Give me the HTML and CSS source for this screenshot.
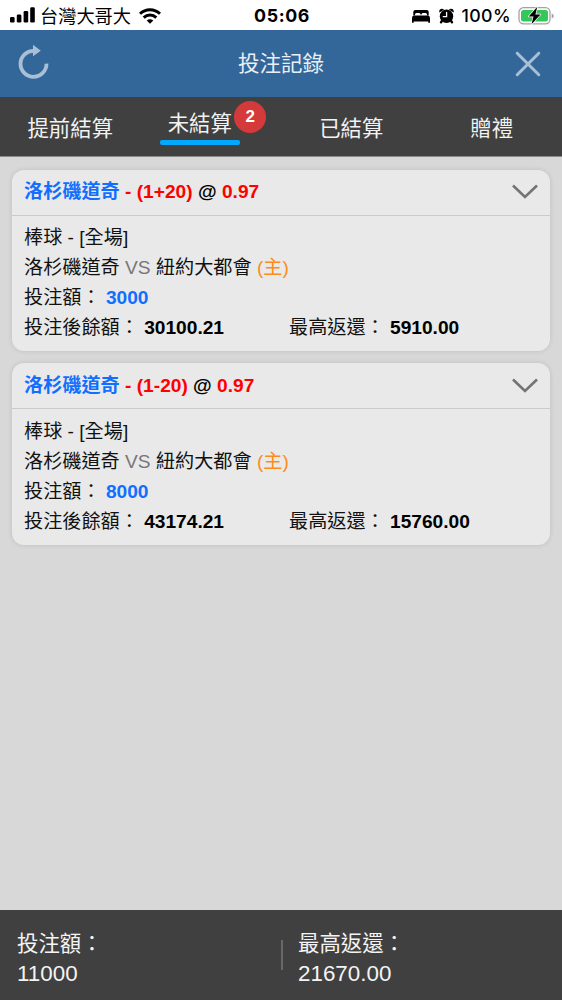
FILE: index.html
```html
<!DOCTYPE html>
<html lang="zh-Hant">
<head>
<meta charset="utf-8">
<title>投注記錄</title>
<link rel="stylesheet" href="styles.css">
</head>
<body>
<div class="screen">
  <div class="status">
    <div class="status-left">
      <svg class="signal" width="25" height="16" viewBox="0 0 25 16"><rect x="0" y="10" width="4.6" height="5.5" rx="1.3"/><rect x="6.8" y="7.5" width="4.6" height="8" rx="1.3"/><rect x="13.6" y="4" width="4.6" height="11.5" rx="1.3"/><rect x="20.2" y="0.3" width="4.6" height="15.2" rx="1.3"/></svg>
      <span class="carrier">台灣大哥大</span>
      <svg class="wifi" width="22" height="16" viewBox="0 0 22 16"><g fill="none" stroke="#000" stroke-width="3"><path d="M1 5.8C6.5.3 15.500.3 21 5.800"/><path d="M4.700 9.700C8.400 6.200 13.600 6.200 17.300 9.700"/></g><path d="M11 15.800L7.700 12.500Q11 9.900 14.300 12.500Z"/></svg>
    </div>
    <div class="clock">05:06</div>
    <div class="status-right">
      <svg class="bed" width="18" height="13" viewBox="0 0 18 13"><path d="M1.300 5.500V2Q1.300 0 3.300 0H14.700Q16.700 0 16.700 2V5.500H15V4.500Q15 3 13.500 3H10.800Q9.500 3 9.500 4.500H8.500Q8.500 3 7.200 3H4.500Q3 3 3 4.500V5.500Z"/><path d="M0 8Q0 5.500 2 5.500H16Q18 5.500 18 8V12.700H16.300V11.500H1.700V12.700H0Z"/></svg>
      <svg class="alarm" width="15" height="16" viewBox="0 0 15 16"><circle cx="7.500" cy="8.300" r="6.700"/><path d="M.3 4.500Q-.2 1 3 .8Q4.300.8 5 1.700ZM14.700 4.500Q15.200 1 12 .8Q10.700.8 10 1.700Z"/><path d="M3.500 12L2 14.300M11.500 12L13 14.300" stroke="#000" stroke-width="2.400" stroke-linecap="round"/><path d="M7.600 4.500V8.700H4.300" fill="none" stroke="#fff" stroke-width="1.300" stroke-linecap="round"/></svg>
      <span class="percent">100%</span>
      <svg class="battery" width="36" height="20" viewBox="0 0 36 20"><rect x="1" y="1.700" width="31" height="16.100" rx="4.500" fill="#fff" stroke="#a3a3a3" stroke-width="1.300"/><rect x="3" y="3.900" width="27" height="11.700" rx="2.500" fill="#34c759"/><path d="M33.700 7.500Q35.800 8.200 35.800 10T33.700 12.500Z" fill="#a3a3a3"/><path d="M19.300.8L10.700 10.500H15.500L13.500 18.200L22.500 8.400H17.400Z" stroke="#fff" stroke-width="1.400" stroke-linejoin="round" paint-order="stroke"/></svg>
    </div>
  </div>

  <header class="header">
    <svg class="refresh" width="32" height="36" viewBox="0 0 32 36"><path d="M17 6.800A13 13 0 1 0 29.500 19.600" fill="none" stroke="#a9bfd5" stroke-width="3.800"/><path d="M16 .8L23.800 6.800L16 12.300Z" fill="#a9bfd5"/></svg>
    <h1 class="title">投注記錄</h1>
    <svg class="close" width="26" height="26" viewBox="0 0 26 26"><path d="M2.200 2.200L23.800 23.800M23.800 2.200L2.200 23.800" stroke="#a9bfd5" stroke-width="3" stroke-linecap="round"/></svg>
  </header>

  <nav class="tabs">
    <div class="tab">提前結算</div>
    <div class="tab active"><span class="tab-label">未結算<span class="badge">2</span></span></div>
    <div class="tab">已結算</div>
    <div class="tab">贈禮</div>
  </nav>

  <main class="list">
    <section class="card">
      <div class="card-head">
        <div class="pick"><span class="blue">洛杉磯道奇</span> <span class="red">- (1+20)</span> @ <span class="red">0.97</span></div>
        <svg class="chevron" width="26" height="16" viewBox="0 0 26 16"><path d="M1 1.500L13 13L25 1.500" fill="none" stroke="#747474" stroke-width="2.600"/></svg>
      </div>
      <div class="card-body">
        <div>棒球 - [全場]</div>
        <div>洛杉磯道奇 <span class="versus">VS</span> 紐約大都會 <span class="home">(主)</span></div>
        <div>投注額： <b class="blue">3000</b></div>
        <div class="amounts"><span>投注後餘額： <b>30100.21</b></span><span>最高返還： <b>5910.00</b></span></div>
      </div>
    </section>
    <section class="card">
      <div class="card-head">
        <div class="pick"><span class="blue">洛杉磯道奇</span> <span class="red">- (1-20)</span> @ <span class="red">0.97</span></div>
        <svg class="chevron" width="26" height="16" viewBox="0 0 26 16"><path d="M1 1.500L13 13L25 1.500" fill="none" stroke="#747474" stroke-width="2.600"/></svg>
      </div>
      <div class="card-body">
        <div>棒球 - [全場]</div>
        <div>洛杉磯道奇 <span class="versus">VS</span> 紐約大都會 <span class="home">(主)</span></div>
        <div>投注額： <b class="blue">8000</b></div>
        <div class="amounts"><span>投注後餘額： <b>43174.21</b></span><span>最高返還： <b>15760.00</b></span></div>
      </div>
    </section>
  </main>

  <footer class="totals">
    <div class="total"><div>投注額：</div><div class="sum">11000</div></div>
    <div class="total second"><div>最高返還：</div><div class="sum">21670.00</div></div>
  </footer>
</div>
</body>
</html>
```
FILE: styles.css
```css
* { box-sizing: border-box; }
body {
  margin: 0;
  font-family: "Liberation Sans", "Noto Sans CJK TC", sans-serif;
  color: #000;
}
svg { display: block; flex: none; }
.screen {
  width: 562px;
  height: 1000px;
  display: flex;
  flex-direction: column;
  background: #d8d8d8;
  overflow: hidden;
}
.status {
  height: 30px;
  flex: none;
  display: grid;
  grid-template-columns: 1fr auto 1fr;
  align-items: center;
  background: #fff;
  padding: 0 8px 0 10px;
  line-height: 30px;
}
.status-left, .status-right { display: flex; align-items: center; }
.status-right { justify-content: flex-end; }
.signal { margin-top: -1px; }
.carrier { font-size: 18.200px; line-height: 28px; padding-top: 2px; margin: 0 8px 0 5px; }
.clock {
  font: 700 17.800px/30px Inter, sans-serif;
  letter-spacing: 0.6px;
}
.percent {
  font: 500 17.800px/30px Inter, sans-serif;
  letter-spacing: 0.4px;
  padding-top: 1px;
  margin: 0 7px 0 7px;
}
.alarm { margin-left: 9px; }
.bed { margin-top: 1px; }
.header {
  height: 67px;
  flex: none;
  display: flex;
  align-items: center;
  justify-content: space-between;
  padding: 0 21px 0 17px;
  background: #336799;
  color: #e9eff5;
}
.title {
  margin: 0 2px 0 0;
  font-size: 21.500px;
  font-weight: 400;
  line-height: 30px;
}
.refresh { margin-top: -3px; }
.tabs {
  height: 60px;
  flex: none;
  display: grid;
  grid-template-columns: repeat(4, 1fr);
  background: #404040;
  border-bottom: 1px solid #8a8a8a;
  color: #f2f2f2;
  font-size: 21.400px;
  line-height: 64px;
  text-align: center;
}
.active {
  justify-self: center;
  width: 80px;
  line-height: 54px;
  margin-left: -22px;
}
.tab-label {
  position: relative;
  display: block;
  height: 48px;
}
.tab-label::after {
  content: "";
  position: absolute;
  left: 0;
  bottom: 0;
  width: 80px;
  height: 5px;
  border-radius: 2px;
  background: #00a8ff;
}
.badge {
  position: absolute;
  left: 74.500px;
  top: 4px;
  width: 32px;
  height: 32px;
  border-radius: 50%;
  background: #d43a3a;
  color: #fff;
  font-size: 17px;
  font-weight: 700;
  line-height: 32px;
}
.list {
  flex: 1;
  padding: 12.500px 12px 0;
  display: flex;
  flex-direction: column;
  gap: 12px;
}
.card {
  height: 181.500px;
  background: #e9e9e9;
  border-radius: 12px;
  box-shadow: 0 0 5px rgba(0, 0, 0, 0.12);
  font-size: 19.150px;
  line-height: 30px;
}
.card-head {
  height: 46px;
  display: flex;
  align-items: center;
  justify-content: space-between;
  padding: 0 12px;
  border-bottom: 1.500px solid #cbcbcb;
  font-weight: 700;
}
.blue { color: #106fff; }
.red { color: #f00; }
.card-body { padding: 7.500px 12px 0; color: #111; }
.versus { color: #777; }
.home { color: #ff8c1a; }
.amounts { display: grid; grid-template-columns: 265px 1fr; }
.amounts b { color: #000; }
.totals {
  height: 90px;
  flex: none;
  display: grid;
  grid-template-columns: 1fr 1fr;
  align-items: center;
  background: #404040;
  color: #f4f4f4;
  font-size: 21.400px;
  line-height: 30px;
}
.total { padding: 8px 0 0 17px; }
.second { background: linear-gradient(#686868, #686868) 0 19px / 2px 30px no-repeat; }
.sum { font-size: 22.400px; }
```
